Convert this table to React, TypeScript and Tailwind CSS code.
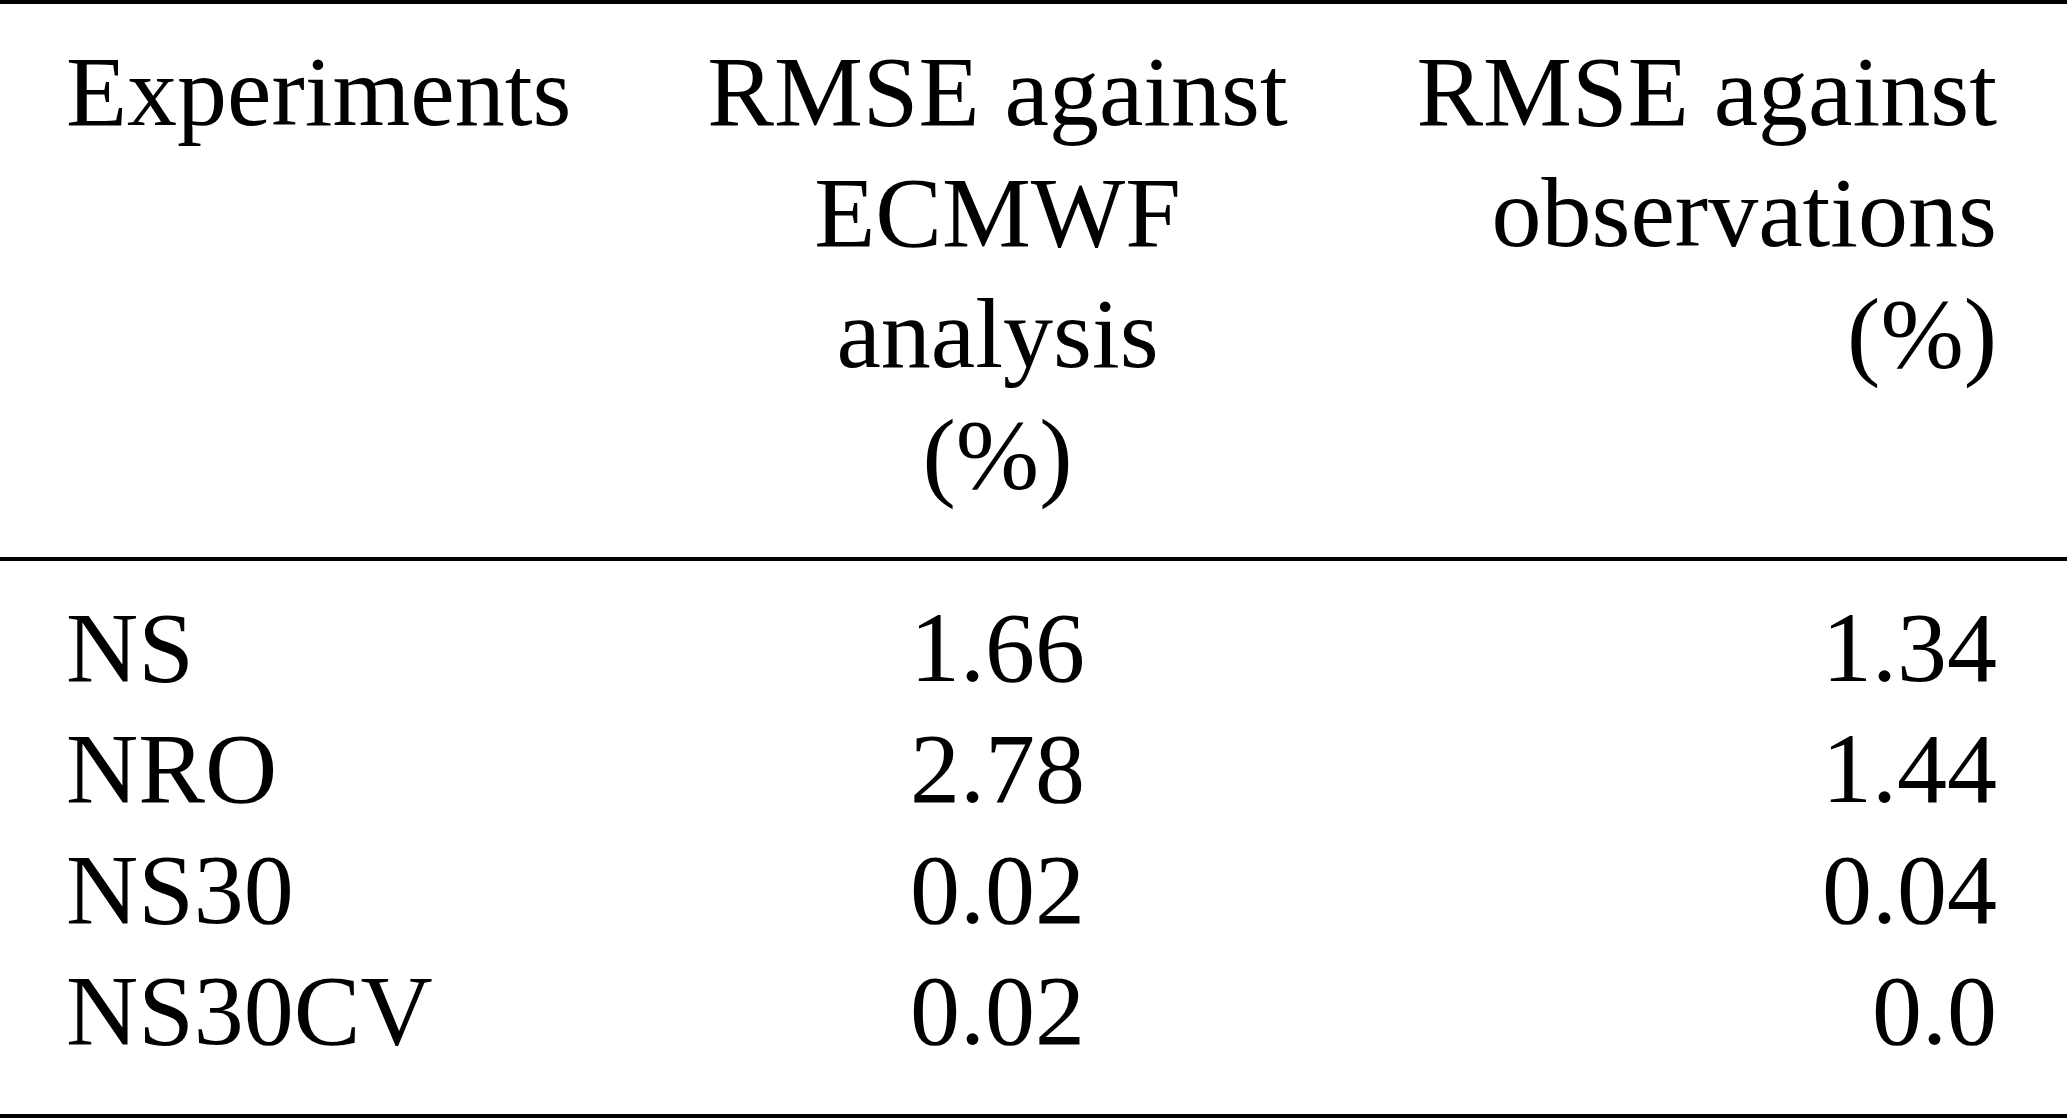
import React from "react";

const rows: [string, string, string][] = [
  ["NS", "1.66", "1.34"],
  ["NRO", "2.78", "1.44"],
  ["NS30", "0.02", "0.04"],
  ["NS30CV", "0.02", "0.0"],
];

export default function App() {
  return (
    <div
      className="w-[2067px] h-[1119px] bg-white text-black text-[100px] leading-[121px] overflow-hidden"
      style={{ fontFamily: '"Liberation Serif", "Times New Roman", serif' }}
    >
      <div className="h-[4px] bg-black" />
      <div className="grid grid-cols-[505px_581px_581px] gap-x-[0px] pl-[66px] pt-[27px] pb-[42px]">
        <div className="whitespace-nowrap">Experiments</div>
        <div className="ml-[136px] w-[581px] text-center">
          <div className="whitespace-nowrap">RMSE against</div>
          <div>ECMWF</div>
          <div>analysis</div>
          <div>(%)</div>
        </div>
        <div className="ml-[264px] w-[581px] text-right">
          <div className="whitespace-nowrap">RMSE against</div>
          <div>observations</div>
          <div>(%)</div>
        </div>
      </div>
      <div className="h-[4px] bg-black" />
      <div className="pt-[26px] pb-[43px] pl-[66px]">
        {rows.map((r) => (
          <div key={r[0]} className="flex">
            <div className="w-[641px] whitespace-nowrap">{r[0]}</div>
            <div className="w-[581px] text-center">{r[1]}</div>
            <div className="ml-[128px] w-[581px] text-right">{r[2]}</div>
          </div>
        ))}
      </div>
      <div className="h-[4px] bg-black" />
    </div>
  );
}
